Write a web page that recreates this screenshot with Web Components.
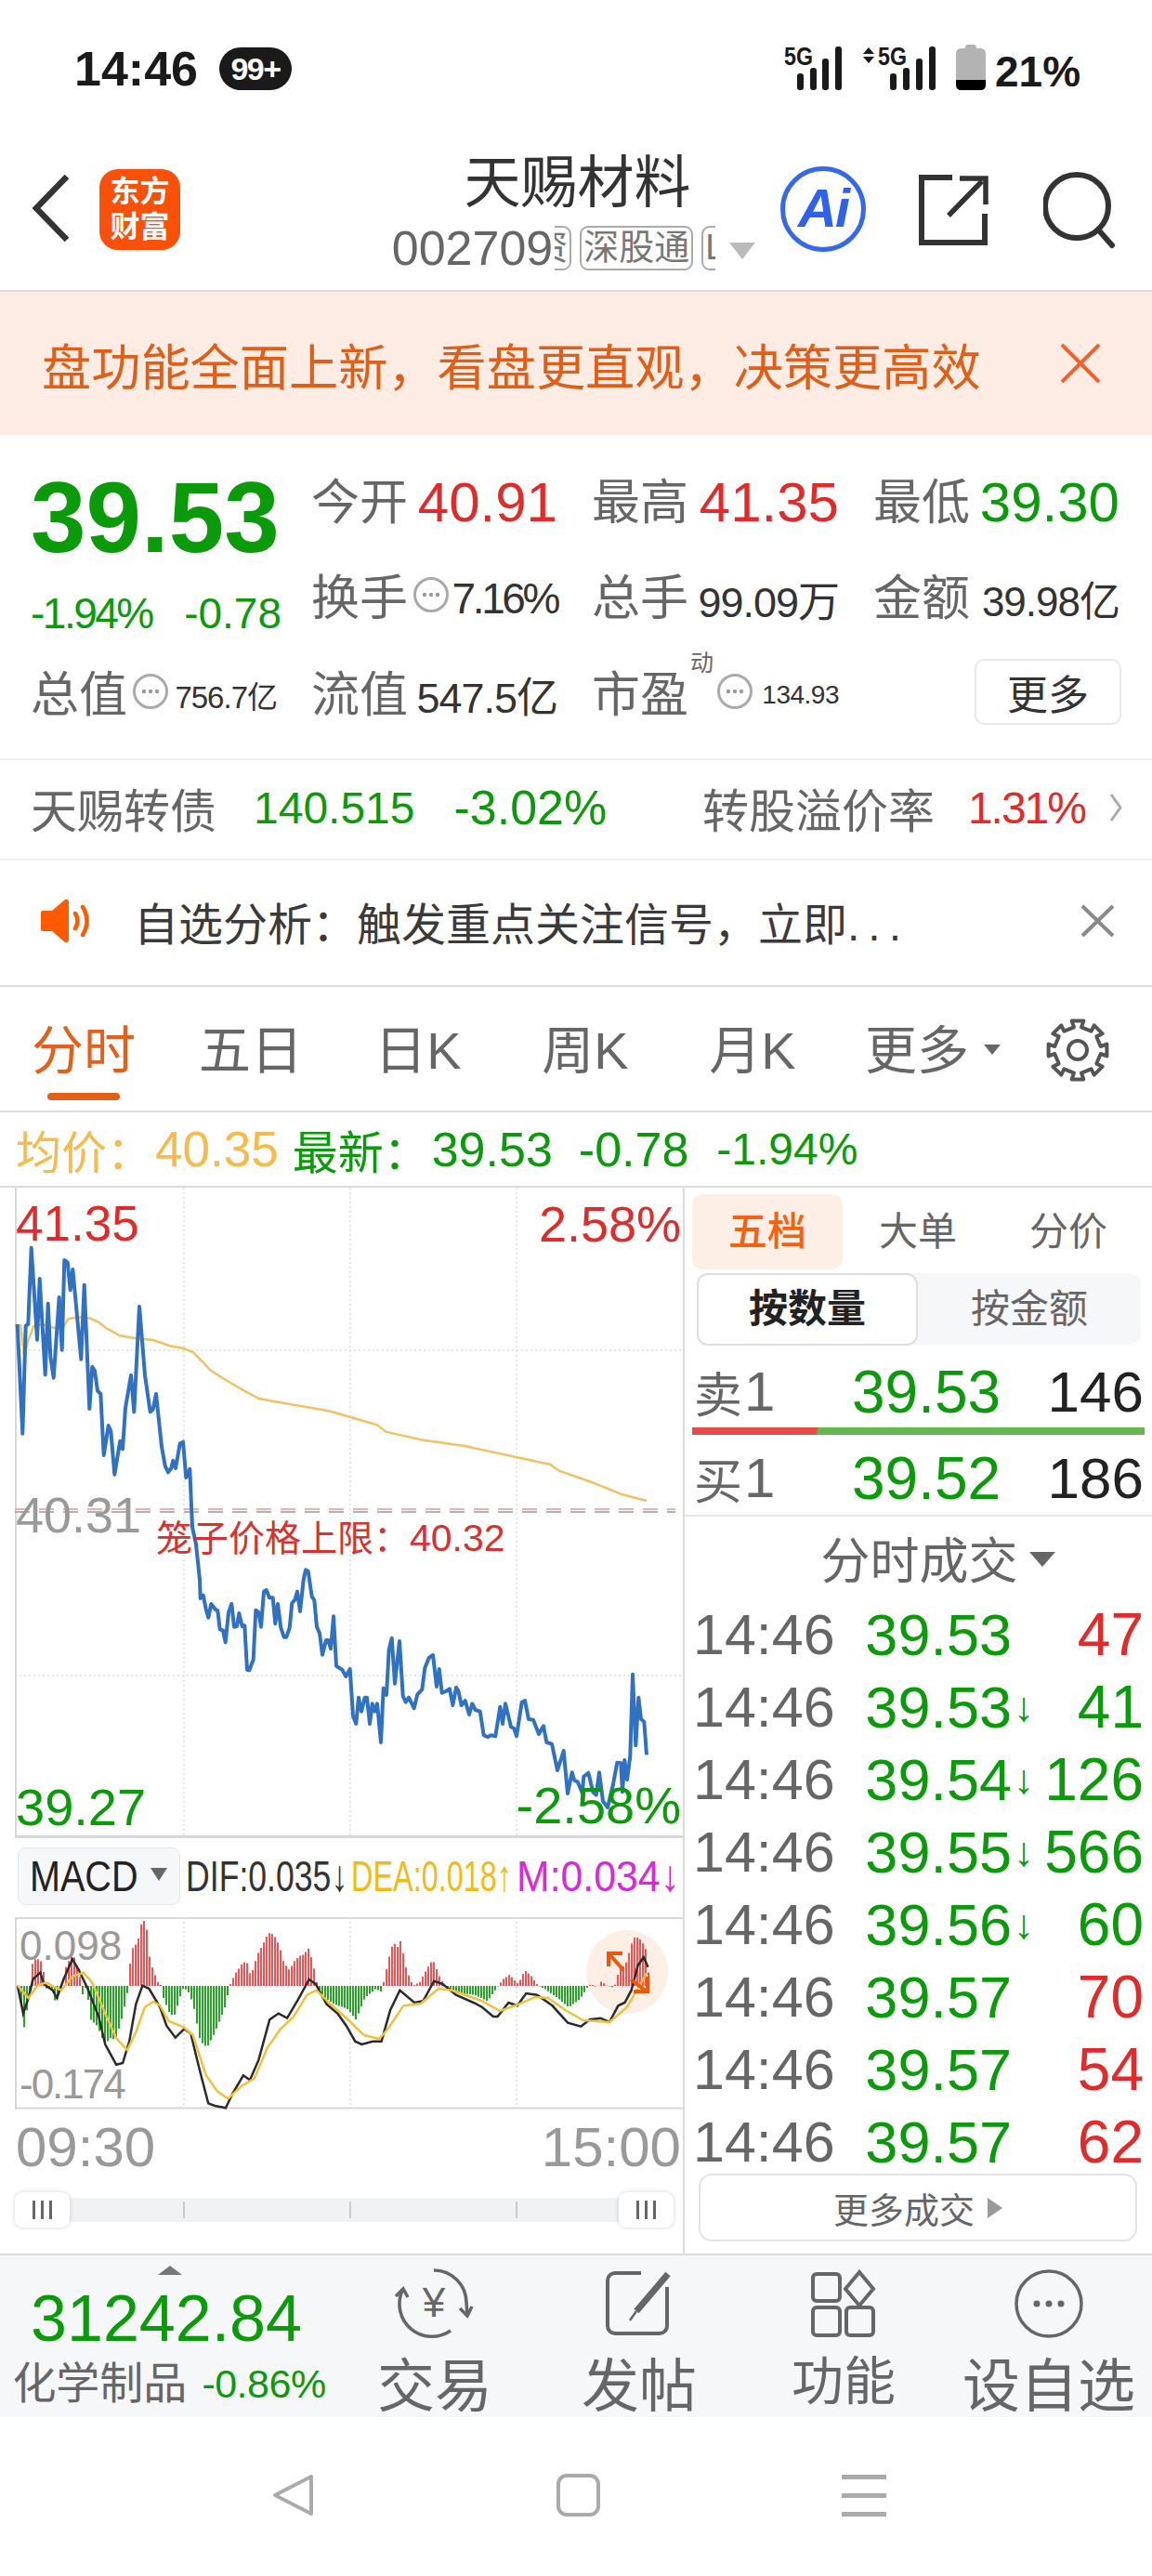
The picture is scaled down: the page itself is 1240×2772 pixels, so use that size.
<!DOCTYPE html>
<html lang="zh-CN">
<head>
<meta charset="utf-8">
<title>天赐材料</title>
<style>
html,body{margin:0;padding:0;background:#fff}
body{width:1240px;font-family:"Liberation Sans","Noto Sans CJK SC",sans-serif;color:#333}
:root{--red:#e02b2b;--green:#0a9a0a;--gray:#666;--line:#e4e4e6;--orange:#e2601a}
</style>
</head>
<body>
<status-bar></status-bar>
<stock-header></stock-header>
<notice-banner>盘功能全面上新，看盘更直观，决策更高效</notice-banner>
<quote-panel>
  <div slot="price">
    <stat-big>39.53</stat-big>
  </div>
  <stat-cell slot="c1" label="今开" style="--vs:60px;--vc:var(--red)">40.91</stat-cell>
  <stat-cell slot="c2" label="最高" style="--vs:60px;--vc:var(--red)">41.35</stat-cell>
  <stat-cell slot="c3" label="最低" style="--vs:60px;--vc:var(--green)">39.30</stat-cell>
  <stat-cell slot="c4" label="换手" tip style="--vs:46px;--ls:-3.4px">7.16%</stat-cell>
  <stat-cell slot="c5" label="总手" style="--vs:45px;--ls:-1px">99.09万</stat-cell>
  <stat-cell slot="c6" label="金额" style="--vs:44px;--ls:-1px">39.98亿</stat-cell>
  <stat-cell slot="c7" label="总值" tip style="--vs:33px;--ls:-1px">756.7亿</stat-cell>
  <stat-cell slot="c8" label="流值" style="--vs:45px;--ls:-1px">547.5亿</stat-cell>
  <stat-cell slot="c9" label="市盈" sup="动" tip style="--vs:28px;--ls:-.5px">134.93</stat-cell>
</quote-panel>
<bond-row></bond-row>
<alert-row></alert-row>
<period-tabs></period-tabs>
<price-line></price-line>
<chart-area>
  <time-chart slot="left"></time-chart>
  <macd-head slot="left"></macd-head>
  <macd-chart slot="left"></macd-chart>
  <time-axis slot="left"></time-axis>
  <range-slider slot="left"></range-slider>
  <order-panel slot="right"></order-panel>
</chart-area>
<bottom-bar></bottom-bar>
<nav-bar></nav-bar>

<script>
// shared helper: template + open shadow root, optional hook once connected
function define(tag, html, onReady) {
  const template = document.createElement('template');
  template.innerHTML = html;
  customElements.define(tag, class extends HTMLElement {
    constructor() {
      super();
      this.attachShadow({mode: 'open'}).appendChild(template.content.cloneNode(true));
    }
    connectedCallback() {
      if (onReady) onReady(this.shadowRoot, this);
    }
  });
}

// polyline helper for traced chart data
const pts = (list, ox, oy, sx, sy) => list.map(p => (ox + p[0] / sx).toFixed(1) + ',' + (oy + p[1] / sy).toFixed(1));

define('status-bar', /*html*/`
<style>
:host{display:flex;height:140px;align-items:flex-start;box-sizing:border-box;padding:44px 0 0 80px;color:#1a1a1a}
.time{font:bold 52px/60px "Liberation Sans",sans-serif;letter-spacing:0}
.badge{margin-left:23px;margin-top:7px;width:78px;height:46px;border-radius:23px;background:#1a1a1a;color:#fff;font:bold 34px/46px "Liberation Sans",sans-serif;text-align:center;letter-spacing:-1.5px}
svg{margin-left:auto;margin-right:73px;margin-top:2px}
</style>
<div class="time">14:46</div>
<div class="badge">99+</div>
<svg width="324" height="54" viewBox="843 46 324 54">
  <g fill="#1a1a1a">
    <text x="844" y="70" font-size="27" font-weight="bold" font-family="Liberation Sans" textLength="31" lengthAdjust="spacingAndGlyphs">5G</text>
    <rect x="858" y="79" width="7" height="18" rx="3"/><rect x="872" y="73" width="7" height="24" rx="3"/><rect x="885" y="63" width="7" height="34" rx="3"/><rect x="899" y="50" width="7" height="47" rx="3"/>
    <path d="M935 51l6 7h-12zM935 68l6-7h-12z"/>
    <text x="945" y="70" font-size="27" font-weight="bold" font-family="Liberation Sans" textLength="31" lengthAdjust="spacingAndGlyphs">5G</text>
    <rect x="958" y="79" width="7" height="18" rx="3"/><rect x="972" y="73" width="7" height="24" rx="3"/><rect x="986" y="63" width="7" height="34" rx="3"/><rect x="1000" y="50" width="7" height="47" rx="3"/>
  </g>
  <path d="M1039 52v-1q0-3 3-3h6q3 0 3 3v1h4q6 0 6 6v33q0 6-6 6h-20q-6 0-6-6v-33q0-6 6-6z" fill="#b3b3b3"/>
  <path d="M1029 86h32v5q0 6-6 6h-20q-6 0-6-6z" fill="#000"/>
  <text x="1071" y="93" font-size="46" font-weight="bold" font-family="Liberation Sans" fill="#1a1a1a">21%</text>
</svg>
`);

define('stock-header', /*html*/`
<style>
:host{display:grid;grid-template-columns:400px 443px 397px;height:172px;border-bottom:2px solid #dcdcde}
.left{display:flex;align-items:flex-start;padding:42px 0 0 32px}
.left svg{margin-top:4px}
.logo{margin-left:31px;width:87px;height:87px;border-radius:20px;background:#f9500a;color:#fff;font-size:32px;line-height:38px;font-weight:700;text-align:center;padding-top:5px;box-sizing:border-box}
.mid{display:flex;flex-direction:column;align-items:center}
.title{font-size:61px;line-height:70px;margin-top:22px;color:#333}
.sub{display:flex;align-items:center;margin:6px 0 0 -8px;height:58px}
.code{font-size:52px;color:#666;line-height:58px}
.clip{width:173px;overflow:hidden;display:flex;margin-left:2px}
.tag{flex:none;border:2px solid #aaa;border-radius:9px;font-size:38px;line-height:42px;height:44px;padding:0 2px;color:#777;margin-right:9px;white-space:nowrap}
.tag.first{margin-left:-66px}
.tri{margin-left:15px;width:0;height:0;border-left:14px solid transparent;border-right:14px solid transparent;border-top:18px solid #bbb;margin-top:6px}
.right{display:flex;align-items:flex-start;padding-top:39px}
.ai{margin-left:-3px;width:92px;height:92px;box-sizing:border-box;border:5px solid #3369ea;border-radius:50%;color:#2f62ea;font:italic bold 58px/80px "Liberation Sans",sans-serif;text-align:center;letter-spacing:-2px}
svg{display:block}
</style>
<div class="left">
  <svg width="44" height="76" viewBox="0 0 44 76"><path d="M40 4L7 38l33 34" fill="none" stroke="#333" stroke-width="6.5"/></svg>
  <div class="logo">东方<br>财富</div>
</div>
<div class="mid">
  <div class="title">天赐材料</div>
  <div class="sub">
    <span class="code">002709</span>
    <div class="clip"><span class="tag first">融资</span><span class="tag">深股通</span><span class="tag">L2</span></div>
    <span class="tri"></span>
  </div>
</div>
<div class="right">
  <div class="ai">Ai</div>
  <svg style="margin-left:57px;margin-top:9px" width="76" height="76" viewBox="0 0 76 76" fill="none" stroke="#333" stroke-width="6"><path d="M36 3H3v70h68V42"/><path d="M32 44L68 7M44 4h28v28" stroke-width="5.5"/></svg>
  <svg style="margin-left:58px;margin-top:5px" width="84" height="84" viewBox="0 0 84 84" fill="none" stroke="#333" stroke-width="6"><circle cx="36" cy="38" r="34"/><path d="M59 63l15 17" stroke-linecap="round"/></svg>
</div>
`);

define('notice-banner', /*html*/`
<style>
:host{display:flex;align-items:center;height:154px;background:#fcece4;box-sizing:border-box;padding-left:45px;color:#df5f18;font-size:53.2px;white-space:nowrap}
svg{margin-left:auto;margin-right:55px}
</style>
<slot></slot>
<svg width="44" height="42" viewBox="0 0 44 42" stroke="#f0622a" stroke-width="4" fill="none"><path d="M2 1l40 40M42 1L2 41"/></svg>
`);

define('stat-big', /*html*/`
<style>
:host{display:block;color:var(--green);font-size:107px;font-weight:bold;line-height:110px;margin-top:13px}
.chg{display:flex;justify-content:space-between;width:270px;font-size:46px;font-weight:400;line-height:50px;margin-top:23px}
.chg span:first-child{letter-spacing:-2.5px}
</style>
<slot></slot>
<div class="chg"><span>-1.94%</span><span>-0.78</span></div>
`);

define('stat-cell', /*html*/`
<style>
:host{display:flex;align-items:center;height:100%;white-space:nowrap}
.lab{font-size:52px;color:#666;line-height:60px}
.sup{font-size:25px;color:#666;line-height:26px;align-self:flex-start;margin:4px 0 0 2px}
.tip{display:none;flex:none;width:38px;height:38px;margin-left:4px;margin-top:-8px;box-sizing:border-box;border:3px solid #aaa;border-radius:50%}
.val{margin-left:auto;font-size:var(--vs,44px);color:var(--vc,#333);letter-spacing:var(--ls,0)}
</style>
<span class="lab"></span><span class="sup"></span>
<span class="tip"><svg width="26" height="26" viewBox="0 0 26 26" fill="#999" style="display:block;margin:3px"><circle cx="6" cy="13" r="2.2"/><circle cx="13" cy="13" r="2.2"/><circle cx="20" cy="13" r="2.2"/></svg></span>
<span class="val"><slot></slot></span>
`, (root, host) => {
  root.querySelector('.lab').textContent = host.getAttribute('label');
  root.querySelector('.sup').textContent = host.getAttribute('sup') || '';
  if (host.hasAttribute('tip')) root.querySelector('.tip').style.display = 'block';
});

define('quote-panel', /*html*/`
<style>
:host{display:block;box-sizing:border-box;padding:21px 0 0 33px;border-bottom:2px solid #eeeeee;height:350px}
.grid{display:grid;grid-template-columns:265px 265px 266px 265px;column-gap:37px;grid-template-rows:103px 104px 103px}
.price{grid-column:1;grid-row:1 / 3}
.more{display:flex;align-items:center;justify-content:center;width:158px;height:71px;box-sizing:border-box;border:2px solid #e8e8e8;border-radius:10px;font-size:44px;color:#333;justify-self:end;align-self:center;margin-top:-6px;margin-right:-2px}
</style>
<div class="grid">
  <div class="price"><slot name="price"></slot></div>
  <slot name="c1"></slot><slot name="c2"></slot><slot name="c3"></slot>
  <slot name="c4"></slot><slot name="c5"></slot><slot name="c6"></slot>
  <slot name="c7"></slot><slot name="c8"></slot><slot name="c9"></slot>
  <div class="more">更多</div>
</div>
`);

define('bond-row', /*html*/`
<style>
:host{display:flex;align-items:center;padding:0 0 4px 33px;box-sizing:border-box;height:108px;border-bottom:2px solid #eeeeee;color:#666;font-size:50px;white-space:nowrap}
.n1{margin-left:40px;color:var(--green);font-size:48px}
.n2{margin-left:42px;color:var(--green);font-size:52px}
.t2{margin-left:auto}
.n3{margin-left:36px;color:var(--red);font-size:48px;letter-spacing:-2px}
svg{margin:0 32px 0 26px}
</style>
<span>天赐转债</span><span class="n1">140.515</span><span class="n2">-3.02%</span>
<span class="t2">转股溢价率</span><span class="n3">1.31%</span>
<svg width="14" height="32" viewBox="0 0 14 32" fill="none" stroke="#aaa" stroke-width="3"><path d="M2 2l10 14L2 30"/></svg>
`);

define('alert-row', /*html*/`
<style>
:host{display:flex;align-items:center;height:136px;box-sizing:border-box;padding:0 0 4px 44px;border-bottom:2px solid #dcdcde;color:#3a3a3a;font-size:48px;white-space:nowrap}
.txt{margin-left:44px}
.dots{letter-spacing:9px}
svg{display:block}
.x{margin-left:auto;margin-right:40px}
</style>
<svg width="56" height="48" viewBox="0 0 56 48"><path d="M2 13h10L26 1q3-1 4 2v42q-1 3-4 2L12 35H2q-2 0-2-2V15q0-2 2-2z" fill="#ff5a00"/><path d="M37 16q5 8 0 16M45 9q9 15 0 30" fill="none" stroke="#ff5a00" stroke-width="4.5" stroke-linecap="round"/></svg>
<span class="txt">自选分析：触发重点关注信号，立即<span class="dots">...</span></span>
<svg class="x" width="37" height="36" viewBox="0 0 37 36" fill="none" stroke="#8a8a8a" stroke-width="4"><path d="M2 2l33 32M35 2L2 34"/></svg>
`);

define('period-tabs', /*html*/`
<style>
:host{display:grid;grid-template-columns:repeat(6,180px) 160px;height:133px;border-bottom:2px solid #dcdcde;color:#666;font-size:56px}
.tab{display:flex;flex-direction:column;align-items:center;padding-top:38px;line-height:62px}
.tab i{display:block;width:78px;height:8px;border-radius:4px;margin-top:14px;background:transparent}
.on{color:var(--orange)}
.on i{background:var(--orange)}
.more{flex-direction:row;justify-content:center;align-items:flex-start;padding-left:28px}
.tri{width:0;height:0;border-left:9px solid transparent;border-right:9px solid transparent;border-top:11px solid #666;margin:24px 0 0 16px}
svg{margin:33px auto 0;display:block}
</style>
<div class="tab on">分时<i></i></div>
<div class="tab">五日<i></i></div>
<div class="tab">日K<i></i></div>
<div class="tab">周K<i></i></div>
<div class="tab">月K<i></i></div>
<div class="tab more">更多<span class="tri"></span></div>
<div><svg width="70" height="70" viewBox="-35 -35 70 70" fill="none" stroke="#555" stroke-width="4" stroke-linejoin="round"><path id="gear"/><circle r="10"/></svg></div>
`, root => {
  // eight toothed outline
  let d = '';
  for (let i = 0; i < 8; i++) {
    const a = i * Math.PI / 4;
    [[25, -.16], [32, -.2], [32, .2], [25, .16]].forEach(s => {
      const x = s[0] * Math.cos(a + s[1]), y = s[0] * Math.sin(a + s[1]);
      d += (d ? 'L' : 'M') + x.toFixed(1) + ' ' + y.toFixed(1);
    });
  }
  root.getElementById('gear').setAttribute('d', d + 'Z');
});

define('price-line', /*html*/`
<style>
:host{display:flex;align-items:center;height:81px;box-sizing:border-box;padding-left:17px;border-bottom:2px solid #dcdcde;font-size:49px;white-space:nowrap;color:var(--green)}
.n{font-size:52px}
.avg{color:#f6bb4c}
</style>
<span class="avg">均价：</span><span class="avg n" style="margin-left:3px;font-size:53px">40.35</span>
<span style="margin-left:15px">最新：</span><span class="n" style="margin-left:3px">39.53</span>
<span class="n" style="margin-left:28px">-0.78</span>
<span class="n" style="margin-left:30px;font-size:48px">-1.94%</span>
`);

define('chart-area', /*html*/`
<style>
:host{display:grid;grid-template-columns:737px 503px;height:1147px}
.l{border-right:2px solid #dcdcde;box-sizing:border-box;width:737px;display:flex;flex-direction:column}
.r{min-width:0}
</style>
<div class="l"><slot name="left"></slot></div>
<div class="r"><slot name="right"></slot></div>
`);

define('time-chart', /*html*/`
<style>
:host{display:block;position:relative;height:700px;overflow:hidden}
svg{display:block}
.lab{position:absolute;font-size:54px;line-height:54px;white-space:nowrap}
.cage{position:absolute;left:168px;top:357px;color:#d8312f;font-size:39px;line-height:40px;white-space:nowrap}
.cage b{font-weight:400;font-size:41px}
</style>
<svg width="735" height="700" viewBox="0 1278 735 700" fill="none">
  <g stroke="#dedede" stroke-width="1.5" stroke-dasharray="2 3">
    <path d="M198 1278V1976M377 1278V1976M556 1278V1976M16 1453H735M16 1803H735"/>
  </g>
  <path d="M17 1278V1977" stroke="#d8d8d8" stroke-width="2"/>
  <path d="M16 1976.5H735" stroke="#d8d8d8" stroke-width="3"/>
  <path d="M16 1624H727" stroke="#dc9a9c" stroke-width="1.5" stroke-dasharray="16 10"/>
  <path d="M16 1627H727" stroke="#999" stroke-width="1.5" stroke-dasharray="16 10"/>
  <polyline id="avg" stroke="#f0c264" stroke-width="2.5"/>
  <polyline id="px" stroke="#3071c2" stroke-width="4" stroke-linejoin="round"/>
</svg>
<span class="lab" style="left:17px;top:12px;color:#e02b2b;font-size:53px">41.35</span>
<span class="lab" style="right:2px;top:12px;color:#e02b2b">2.58%</span>
<span class="lab" style="left:17px;top:325px;color:#999">40.31</span>
<span class="cage">笼子价格上限：<b>40.32</b></span>
<span class="lab" style="left:17px;top:640px;color:#0a9a0a;font-size:56px">39.27</span>
<span class="lab" style="right:2px;top:638px;color:#0a9a0a;font-size:56px">-2.58%</span>
`, root => {
  const a = [[8,255],[25,608],[35,260],[43,255],[53,8],[72,305],[80,108],[98,418],[107,188],[115,360],[125,428],[143,168],[152,338],[160,48],[170,55],[179,145],[187,78],[214,368],[224,128],[241,528],[250,392],[258,405],[267,470],[277,480],[287,678],[302,582],[310,600],[322,740],[340,632],[348,658],[357,525],[375,420],[385,538],[402,198],[420,420],[437,538],[446,530],[456,480],[474,650],[485,712],[495,733],[505,720],[511,695],[519,720],[533,640],[543,635],[553,750],[565,722],[573,910],[585,965],[597,1080]];
  const b = [[47,180],[56,170],[65,215],[73,242],[82,198],[95,215],[103,220],[110,280],[120,283],[128,322],[138,225],[148,198],[156,272],[165,270],[172,228],[182,270],[190,268],[198,410],[205,412],[218,378],[226,218],[235,225],[243,272],[252,158],[260,153],[270,178],[281,178],[289,262],[297,198],[307,275],[317,305],[325,305],[335,275],[343,195],[352,185],[360,158],[369,222],[380,120],[387,88],[395,92],[407,175],[415,185],[423,272],[432,292],[441,362],[453,315],[460,315],[468,343],[477,238],[486,398],[505,410],[517,432],[530,408],[540,560],[550,585],[558,500],[567,545],[578,500],[585,500],[594,585],[602,520],[610,545],[618,520],[630,645],[638,470],[648,492],[656,345],[665,308],[675,455],[690,318],[701,495],[710,515],[720,500],[737,535],[748,490],[762,475]];
  const c = [[13,115],[22,45],[35,12],[48,3],[60,105],[68,48],[77,125],[90,120],[102,112],[112,165],[123,108],[130,118],[140,165],[152,150],[165,195],[175,160],[185,180],[200,185],[212,262],[225,268],[235,262],[250,265],[265,170],[273,225],[282,160],[300,235],[310,240],[318,265],[335,155],[345,150],[357,210],[372,212],[390,258],[405,232],[415,285],[432,290],[450,375],[470,312],[483,450],[497,382],[505,408],[515,412],[530,448],[535,395],[550,383],[565,445],[575,455],[585,382],[597,475],[612,495],[630,420],[643,350],[655,352],[660,445],[667,342],[675,405],[685,330],[693,65],[703,295],[712,140],[720,210],[730,218],[738,325]];
  root.getElementById('px').setAttribute('points', [...pts(a, 16, 1340, 3, 3), ...pts(b, 200, 1660, 3, 3), ...pts(c, 450, 1780, 3, 3)].join(' '));
  const y1 = [[18,255],[30,355],[42,310],[60,262],[90,255],[130,268],[158,262],[172,238],[205,232],[240,235],[270,248],[295,268],[340,292],[400,302],[445,305],[500,325],[545,333],[575,345],[610,380],[630,402],[665,425],[720,458]];
  const y2 = [[590,75],[640,88],[750,115],[800,135],[860,160],[880,182],[960,208],[1060,228],[1180,265],[1255,288],[1275,308],[1350,345],[1420,385],[1475,405]];
  root.getElementById('avg').setAttribute('points', [...pts(y1, 16, 1340, 3, 3), ...pts(y2, 0, 1480, 2.119, 3)].join(' '));
});

define('macd-head', /*html*/`
<style>
:host{display:flex;height:85px;box-sizing:border-box;padding:10px 0 0 19px;white-space:nowrap}
.btn{flex:none;display:flex;align-items:center;width:175px;height:62px;box-sizing:border-box;border:1.5px solid #e4e5e8;border-radius:9px;background:#f6f7f9;padding-left:12px;color:#222}
.btn span{display:inline-block;font-size:46px;width:120px;transform:scaleX(.86);transform-origin:left center}
.tri{width:0;height:0;border-left:9px solid transparent;border-right:9px solid transparent;border-top:14px solid #666;margin-left:10px;margin-top:-4px}
.it{display:block;flex:none;width:178px;font-size:47px;line-height:62px}
.it span{display:inline-block;transform-origin:left center}
</style>
<div class="btn"><span>MACD</span><i class="tri"></i></div>
<span class="it" style="margin-left:6px;color:#333"><span style="transform:scaleX(.758)">DIF:0.035↓</span></span>
<span class="it" style="color:#f0bb1a"><span style="transform:scaleX(.69)">DEA:0.018↑</span></span>
<span class="it" style="color:#d62bd6"><span style="transform:scaleX(.91)">M:0.034↓</span></span>
`);

define('macd-chart', /*html*/`
<style>
:host{display:block;position:relative;height:207px;overflow:hidden}
svg{display:block}
.lab{position:absolute;left:21px;color:#999;font-size:44px;line-height:44px}
</style>
<svg width="735" height="207" viewBox="0 2063 735 207" fill="none">
  <path d="M16 2064H735M16 2268.5H735M17 2063V2270" stroke="#d8d8d8" stroke-width="2"/>
  <path d="M198 2063V2268M377 2063V2268M556 2063V2268" stroke="#dedede" stroke-width="1.5" stroke-dasharray="2 3"/>
  <ellipse cx="675" cy="2122" rx="44" ry="45" fill="#fdeee6"/>
  <path id="hr" fill="#ea5656"/>
  <path id="hg" fill="#27a527"/>
  <polyline id="dif" stroke="#2b2b2b" stroke-width="2.5"/>
  <polyline id="dea" stroke="#eec23a" stroke-width="2.5"/>
  <g stroke="#e8590c" stroke-width="4" fill="none">
    <path d="M671 2120L656 2103M655 2116v-14h15"/>
    <path d="M679 2130L696 2143M697 2127v16h-15"/>
  </g>
</svg>
<span class="lab" style="top:9px">0.098</span>
<span class="lab" style="top:158px;letter-spacing:-2px">-0.174</span>
`, root => {
  // histogram envelope, sampled into one bar every 3px around the zero line
  const h = [[40,500],[53,635],[65,530],[70,500],[72,430],[78,415],[90,415],[100,470],[103,510],[115,500],[125,560],[135,520],[142,500],[145,450],[155,420],[165,400],[175,440],[185,500],[186,530],[195,500],[205,610],[220,630],[237,690],[250,670],[262,675],[275,610],[288,530],[289,500],[290,470],[300,380],[312,360],[323,280],[332,310],[340,420],[350,460],[360,495],[367,500],[368,530],[385,590],[395,600],[410,530],[417,505],[430,525],[440,570],[455,680],[470,700],[485,660],[500,610],[510,575],[522,500],[525,490],[535,460],[550,430],[560,420],[570,470],[585,400],[600,360],[610,330],[622,335],[635,370],[645,425],[658,450],[670,420],[680,405],[690,400],[702,380],[712,430],[722,500],[725,510],[740,540],[760,560],[790,575],[810,610],[830,540],[855,510],[868,520],[872,495],[885,410],[895,360],[905,375],[912,355],[925,450],[940,500],[955,490],[970,450],[985,415],[1000,470],[1012,500],[1015,505],[1050,525],[1080,530],[1110,550],[1135,500],[1145,480],[1160,465],[1180,495],[1195,450],[1210,470],[1225,500],[1240,510],[1270,540],[1295,570],[1320,545],[1338,505],[1345,495],[1360,505],[1370,485],[1380,500],[1395,505],[1400,500],[1410,450],[1425,430],[1443,345],[1455,345],[1470,375],[1478,470]];
  let red = '', green = '';
  const zero = 2137;
  for (let x = 19; x <= 697; x += 3) {
    const px = x * 2.119;
    let i = h.findIndex(p => p[0] >= px);
    if (i < 1) continue;
    const t = (px - h[i - 1][0]) / (h[i][0] - h[i - 1][0]);
    const y = 1970 + (h[i - 1][1] + (h[i][1] - h[i - 1][1]) * t) / 3;
    const bar = `M${x} ${zero}V${y.toFixed(1)}h2V${zero}z`;
    if (y < zero) red += bar; else green += bar;
  }
  root.getElementById('hr').setAttribute('d', red);
  root.getElementById('hg').setAttribute('d', green);
  const dif = [[40,500],[53,590],[65,540],[75,480],[92,458],[100,495],[120,515],[130,540],[145,480],[165,415],[180,450],[200,510],[225,600],[240,690],[265,755],[280,750],[295,680],[310,560],[325,500],[340,510],[365,570],[380,630],[400,668],[420,640],[435,655],[455,770],[475,880],[490,888],[515,895],[530,850],[555,790],[570,805],[590,740],[615,610],[635,590],[655,605],[680,545],[705,480],[720,495],[745,560],[770,590],[790,630],[810,680],[825,690],[850,680],[870,680],[890,580],[912,515],[945,555],[965,550],[990,485],[1010,495],[1040,530],[1080,555],[1100,570],[1125,600],[1135,600],[1160,555],[1180,565],[1200,525],[1225,530],[1260,565],[1295,620],[1325,632],[1345,610],[1370,605],[1390,618],[1410,565],[1425,555],[1440,515],[1455,435],[1468,408],[1478,440]];
  const dea = [[40,500],[65,540],[85,500],[105,490],[125,505],[140,515],[165,470],[190,458],[210,490],[240,590],[265,670],[290,708],[310,650],[330,570],[350,552],[365,565],[385,615],[420,635],[440,660],[470,790],[495,840],[520,865],[550,825],[580,800],[610,700],[640,640],[670,600],[700,530],[722,515],[750,555],[790,605],[830,660],[865,672],[885,640],[920,565],[960,558],[1000,510],[1030,515],[1070,535],[1100,550],[1140,582],[1180,562],[1220,537],[1250,540],[1290,580],[1330,612],[1390,618],[1430,570],[1450,520],[1475,460]];
  root.getElementById('dif').setAttribute('points', pts(dif, 0, 1970, 2.119, 3).join(' '));
  root.getElementById('dea').setAttribute('points', pts(dea, 0, 1970, 2.119, 3).join(' '));
});

define('time-axis', /*html*/`
<style>
:host{display:flex;justify-content:space-between;height:82px;box-sizing:border-box;padding:11px 2px 0 17px;color:#999;font-size:60px;line-height:60px}
</style>
<span>09:30</span><span>15:00</span>
`);

define('range-slider', /*html*/`
<style>
:host{display:block;position:relative;height:73px}
.track{position:absolute;left:40px;top:13px;width:660px;height:26px;background:#f1f2f4}
.tick{position:absolute;top:4px;width:2px;height:18px;background:#ccc}
.h{position:absolute;top:7px;width:59px;height:38px;border-radius:9px;background:#fff;box-shadow:0 0 5px rgba(0,0,0,.18);display:flex;align-items:center;justify-content:center;gap:6px}
.h i{display:block;width:3px;height:20px;background:#666}
</style>
<div class="track"><span class="tick" style="left:157px"></span><span class="tick" style="left:336px"></span><span class="tick" style="left:515px"></span></div>
<div class="h" style="left:16px"><i></i><i></i><i></i></div>
<div class="h" style="left:666px"><i></i><i></i><i></i></div>
`);

define('trade-row', /*html*/`
<style>
:host{display:grid;grid-template-columns:180px 163px 32px 1fr;height:78px;align-items:center;padding:0 9px 0 9px;white-space:nowrap;font-size:63px;color:var(--green)}
.t{color:#666;font-size:61px}
.p{text-align:right}
.a{font-size:44px;font-weight:bold;padding-left:2px}
.q{text-align:right;font-size:64px}
</style>
<span class="t">14:46</span><span class="p"></span><span class="a"></span><span class="q"><slot></slot></span>
`, (root, host) => {
  root.querySelector('.p').textContent = host.getAttribute('price');
  root.querySelector('.a').textContent = host.hasAttribute('drop') ? '↓' : '';
  if (host.hasAttribute('red')) root.querySelector('.q').style.color = 'var(--red)';
});

define('order-panel', /*html*/`
<style>
:host{display:block;height:1147px;overflow:hidden}
.tabs{display:grid;grid-template-columns:162px 162px 162px;margin:7px 0 0 8px;height:77px;color:#666;font-size:42px;text-align:center;line-height:81px}
.tabs .on{background:#fdeee6;color:#f4610f;border-radius:12px;font-weight:500}
.seg{display:grid;grid-template-columns:238px 240px;margin:8px 0 0 13px;width:478px;height:77px;background:#f6f7f9;border-radius:12px;font-size:42px;text-align:center;line-height:78px;color:#666}
.seg .on{background:#fff;border:2px solid #dedede;border-radius:12px;color:#222;font-weight:bold;line-height:74px}
.book{display:grid;grid-template-columns:170px 159px 1fr;height:77px;align-items:center;padding:0 9px 0 10px;font-size:64px;color:var(--green)}
.book .s{display:flex;align-items:center;color:#666;white-space:nowrap}
.book .s b{font-weight:400;font-size:52px}
.book .s em{font-style:normal;font-size:60px;margin-left:2px}
.book .q{color:#222;text-align:right;font-size:62px}
.book .p{text-align:right}
.bar{margin:0 8px;height:8px;background:linear-gradient(105deg,#e54b4b 130px,#63b84f 132px)}
.b2{margin-top:9px;height:79px;padding-bottom:2px;box-sizing:border-box;border-bottom:2px solid #e6e6e6}
.head{display:flex;justify-content:center;align-items:center;height:88px;color:#666;font-size:53px;padding-left:42px;box-sizing:border-box}
.head i{width:0;height:0;border-left:14px solid transparent;border-right:14px solid transparent;border-top:16px solid #666;margin-left:12px;margin-top:3px}
.list{height:609px;overflow:hidden}
.btn{display:flex;justify-content:center;align-items:center;margin:10px 0 0 15px;width:472px;height:73px;box-sizing:border-box;border:2px solid #e4e4e4;border-radius:14px;color:#666;font-size:38px}
.btn i{width:0;height:0;border-top:11px solid transparent;border-bottom:11px solid transparent;border-left:16px solid #999;margin-left:14px}
</style>
<div class="tabs"><div class="on">五档</div><div>大单</div><div>分价</div></div>
<div class="seg"><div class="on">按数量</div><div>按金额</div></div>
<div class="book" style="margin-top:12px"><span class="s"><b>卖</b><em>1</em></span><span class="p">39.53</span><span class="q">146</span></div>
<div class="bar"></div>
<div class="book b2"><span class="s"><b>买</b><em>1</em></span><span class="p">39.52</span><span class="q">186</span></div>
<div class="head">分时成交<i></i></div>
<div class="list">
  <trade-row price="39.53" red>47</trade-row>
  <trade-row price="39.53" drop>41</trade-row>
  <trade-row price="39.54" drop>126</trade-row>
  <trade-row price="39.55" drop>566</trade-row>
  <trade-row price="39.56" drop>60</trade-row>
  <trade-row price="39.57" red>70</trade-row>
  <trade-row price="39.57" red>54</trade-row>
  <trade-row price="39.57" red>62</trade-row>
</div>
<div class="btn">更多成交<i></i></div>
`);

define('bottom-tab', /*html*/`
<style>
:host{display:flex;flex-direction:column;align-items:center;color:#666;font-size:var(--fs,62px);white-space:nowrap;height:174px;box-sizing:border-box}
.icon{height:95px;padding-top:14px;box-sizing:border-box}
.lab{line-height:60px;margin-top:var(--mt,17px)}
</style>
<div class="icon"><slot name="icon"></slot></div>
<div class="lab"><slot></slot></div>
`);

define('bottom-bar', /*html*/`
<style>
:host{display:grid;grid-template-columns:358px 220px 220px 220px 222px;height:174px;background:#f6f7f9;border-top:2px solid #dcdcde;overflow:hidden}
.q{display:flex;flex-direction:column;align-items:center;white-space:nowrap}
.tri{width:0;height:0;border-left:13px solid transparent;border-right:13px solid transparent;border-bottom:10px solid #777;margin:11px 0 0 8px}
.v{font-size:70px;line-height:76px;color:var(--green);margin-top:9px}
.s{display:flex;align-items:center;font-size:47px;color:#666;line-height:60px;margin-top:2px;margin-left:6px}
.s b{font-weight:400;font-size:43px;color:var(--green);margin-left:16px;letter-spacing:-.5px}
svg{display:block}
</style>
<div class="q"><div class="tri"></div><div class="v">31242.84</div><div class="s">化学制品<b>-0.86%</b></div></div>
<bottom-tab>
  <svg slot="icon" width="90" height="76" viewBox="0 0 90 76" fill="none" stroke="#666" stroke-width="3.5"><path d="M44 2A35 35 0 0 1 79 37L80 50"/><path d="M72 43l8 8 5-10"/><path d="M10 24A35 35 0 0 0 62 67"/><path d="M3 30l8-8 5 9"/><text x="44" y="52" text-anchor="middle" font-size="44" fill="#666" stroke="none" font-family="Liberation Sans">¥</text></svg>
  交易
</bottom-tab>
<bottom-tab>
  <svg slot="icon" width="80" height="76" viewBox="0 0 80 76" fill="none" stroke="#666" stroke-width="4"><path d="M42 5H14a8 8 0 0 0-8 8V62a8 8 0 0 0 8 8H62a8 8 0 0 0 8-8V20"/><path d="M71 6L37 46" stroke-width="7"/><path d="M37 46L30 56" stroke-width="2.5"/></svg>
  发帖
</bottom-tab>
<bottom-tab style="--fs:56px;--mt:11px">
  <svg slot="icon" width="70" height="76" viewBox="0 0 70 76" fill="none" stroke="#666" stroke-width="4"><rect x="2" y="6" width="29" height="29" rx="4"/><path d="M52 4l15 18-15 18-15-18z"/><rect x="2" y="42" width="29" height="30" rx="4"/><rect x="38" y="42" width="29" height="30" rx="4"/></svg>
  功能
</bottom-tab>
<bottom-tab>
  <svg slot="icon" width="76" height="76" viewBox="0 0 76 76" fill="none" stroke="#666" stroke-width="3.5"><circle cx="38" cy="38" r="35"/><g fill="#666" stroke="none"><circle cx="25" cy="38" r="3.5"/><circle cx="38" cy="38" r="3.5"/><circle cx="51" cy="38" r="3.5"/></g></svg>
  设自选
</bottom-tab>
`);

define('nav-bar', /*html*/`
<style>
:host{display:flex;height:171px;box-sizing:border-box;padding:61px 0 0 293px;gap:260px;background:#fff;align-items:flex-start}
svg{display:block}
</style>
<svg width="46" height="46" viewBox="0 0 46 46" fill="none" stroke="#aaa" stroke-width="4" stroke-linejoin="round"><path d="M42 3v40L3 23z"/></svg>
<svg width="47" height="46" viewBox="0 0 47 46" fill="none" stroke="#aaa" stroke-width="4"><rect x="2" y="2" width="43" height="42" rx="9"/></svg>
<svg width="48" height="46" viewBox="0 0 48 46" fill="#aaa"><rect width="48" height="5" y="1"/><rect width="48" height="5" y="21"/><rect width="48" height="5" y="41"/></svg>
`);
</script>
</body>
</html>
